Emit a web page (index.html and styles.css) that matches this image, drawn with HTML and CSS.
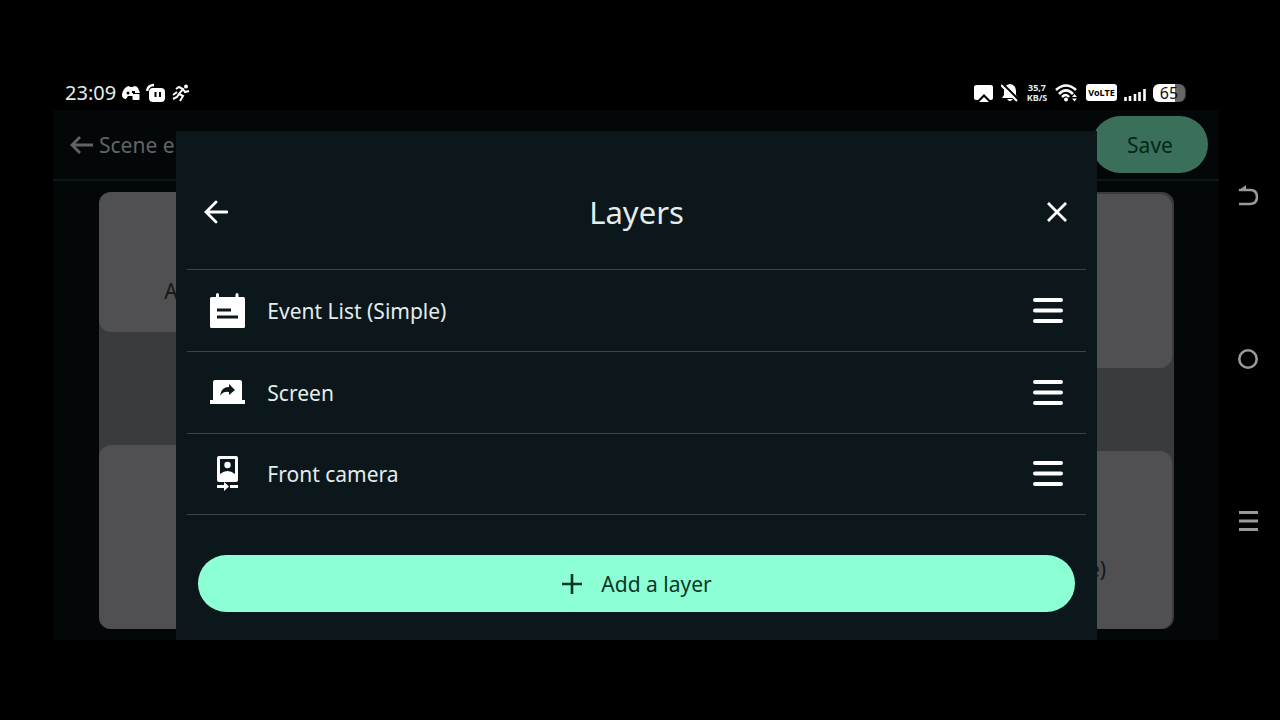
FILE: index.html
```
<!DOCTYPE html>
<html lang="en">
<head>
    <meta charset="utf-8">
    <title>Layers</title>
    <link rel="stylesheet" href="styles.css">
</head>
<body>
<header class="status-bar">
    <div class="status-group">
        <span class="clock">23:09</span>
        <svg width="18" height="20" viewBox="0 0 18 20">
            <path d="M3 5 Q5 3 7 3 L8 4 H11 L12 3 Q15 3 16 5 L18 10 H11 V13 H6 L4 16 Q1 16 0 13 Q0 8 3 5z" fill="#fff"/>
            <circle cx="6" cy="10" r="1.5" fill="#000"/>
            <path d="M10 9 H13" stroke="#000" stroke-width="2"/>
            <rect x="10.500" y="11" width="7" height="6" rx="1" fill="#fff"/>
        </svg>
        <svg width="20" height="20" viewBox="0 0 20 20">
            <path d="M1 8 Q2 2 8 2" fill="none" stroke="#fff" stroke-width="2.4"/>
            <rect x="3" y="5" width="16" height="14" rx="4" fill="#fff"/>
            <path d="M9.500 9 V14 M14 9 V14" stroke="#000" stroke-width="2"/>
        </svg>
        <svg width="18" height="20" viewBox="0 0 18 20">
            <circle cx="14" cy="3.500" r="2" fill="#fff"/>
            <path d="M4 6 L7 4 L11 6 L7 11 L11 13 L8 18 M11 6 L13 9 L17 8 M7 11 L5 14 L1 16 M1 12 L5 9" fill="none" stroke="#fff" stroke-width="2"/>
        </svg>
    </div>
    <div class="status-group status-right">
        <svg width="20" height="20" viewBox="0 0 20 20">
            <path d="M3 2 H17 Q19 2 19 4 V15 Q19 17 17 17 H16 L10 11 L4 17 H3 Q0 17 0 15 V4 Q0 2 3 2z" fill="#fff"/>
            <path d="M5 19 L10 14 L15 19z" fill="#fff"/>
        </svg>
        <svg width="18" height="20" viewBox="0 0 18 20">
            <path d="M9 1 Q15 2 15 8 V12 L17 15 H1 L3 12 V8 Q3 2 9 1z M6 16 H12 Q9 20 6 16z" fill="#fff"/>
            <path d="M2 1 L18 17" stroke="#000" stroke-width="2"/>
            <path d="M0 2 L16 18" stroke="#fff" stroke-width="2"/>
        </svg>
        <span class="net-speed"><span>35,7</span><span>KB/S</span></span>
        <svg width="24" height="20" viewBox="0 0 24 20">
            <path d="M1 7 Q11 -2 21 7 M4 11 Q11 4 18 11 M7 14 Q11 10 14 14" fill="none" stroke="#fff" stroke-width="2.6"/>
            <circle cx="11" cy="16.500" r="2" fill="#fff"/>
            <path d="M17 14 L19.500 11 L22 14z M17 15.500 H22 L19.500 18.500z" fill="#fff"/>
        </svg>
        <span class="volte">VoLTE</span>
        <svg width="22" height="20" viewBox="0 0 22 20">
            <path d="M1.500 18 V14 M6 18 V13 M11 18 V11 M15.500 18 V9 M20.500 18 V6" stroke="#fff" stroke-width="2.6"/>
        </svg>
        <span class="battery">65</span>
    </div>
</header>

<div class="screen">
    <main class="app">
        <div class="top-bar">
            <a class="back-link" href="#">
                <svg width="24" height="20" viewBox="0 0 24 20">
                    <path d="M23 10 H2 M10 2 L2 10 L10 18" fill="none" stroke="#626464" stroke-width="2.8"/>
                </svg>
                Scene e
            </a>
            <button class="save-button">Save</button>
        </div>
        <div class="stage">
            <div class="column column-left">
                <div class="card card-a">A</div>
                <div class="card card-b"></div>
            </div>
            <div class="column column-right">
                <div class="card card-c"></div>
                <div class="card card-d">e)</div>
            </div>
        </div>

        <div class="overlay">
            <section class="dialog" role="dialog" aria-labelledby="dialogTitle">
                <div class="dialog-header">
                    <button aria-label="Back">
                        <svg width="24" height="24" viewBox="0 0 24 24">
                            <path d="M23 12 H2 M12 2 L2 12 L12 22" fill="none" stroke="#fff" stroke-width="2.8" stroke-linecap="round"/>
                        </svg>
                    </button>
                    <h1 id="dialogTitle">Layers</h1>
                    <button aria-label="Close">
                        <svg width="24" height="24" viewBox="0 0 24 24">
                            <path d="M3 3 L21 21 M21 3 L3 21" stroke="#fff" stroke-width="2.8"/>
                        </svg>
                    </button>
                </div>
                <ul class="layers">
                    <li>
                        <svg width="36" height="36" viewBox="0 0 36 36">
                            <path d="M8.500 1.500 V6 M28 1.500 V6" stroke="#fff" stroke-width="3" stroke-linecap="round"/>
                            <rect x="1" y="4" width="35" height="31" rx="1.500" fill="#fff"/>
                            <path d="M8 17 H22 M8 24 H29" stroke="#0b171b" stroke-width="2.8"/>
                        </svg>
                        <span>Event List (Simple)</span>
                        <button class="handle" aria-label="Move Event List">
                            <svg width="30" height="26" viewBox="0 0 30 26">
                                <path d="M2 2 H28 M2 12.500 H28 M2 23 H28" stroke="#fff" stroke-width="4" stroke-linecap="round"/>
                            </svg>
                        </button>
                    </li>
                    <li>
                        <svg width="36" height="36" viewBox="0 0 36 36">
                            <path d="M6 5 H31 Q33 5 33 7 V25 H36 V29 H1 V25 H4 V7 Q4 5 6 5z" fill="#fff"/>
                            <path d="M11 21 Q12 12 20 12 V9 L26 15 L20 20 V17 Q14 16 11 21z" fill="#0b171b"/>
                        </svg>
                        <span>Screen</span>
                        <button class="handle" aria-label="Move Screen">
                            <svg width="30" height="26" viewBox="0 0 30 26">
                                <path d="M2 2 H28 M2 12.500 H28 M2 23 H28" stroke="#fff" stroke-width="4" stroke-linecap="round"/>
                            </svg>
                        </button>
                    </li>
                    <li>
                        <svg width="36" height="36" viewBox="0 0 36 36">
                            <path d="M10 0 H27 Q29 0 29 2 V24 Q29 26 27 26 H10 Q8 26 8 24 V2 Q8 0 10 0z" fill="#fff"/>
                            <path d="M11 3 H26 V18 Q18.500 12 11 18z" fill="#0b171b"/>
                            <circle cx="18.500" cy="9" r="3.200" fill="#fff"/>
                            <path d="M8 29 H15 V26 L20 30.500 L15 35 V32 H8z M21 29 H29 V32 H21z" fill="#fff"/>
                        </svg>
                        <span>Front camera</span>
                        <button class="handle" aria-label="Move Front camera">
                            <svg width="30" height="26" viewBox="0 0 30 26">
                                <path d="M2 2 H28 M2 12.500 H28 M2 23 H28" stroke="#fff" stroke-width="4" stroke-linecap="round"/>
                            </svg>
                        </button>
                    </li>
                </ul>
                <button class="add-button">
                    <svg width="22" height="22" viewBox="0 0 22 22">
                        <path d="M11 1 V21 M1 11 H21" stroke="#0d3527" stroke-width="2.6"/>
                    </svg>
                    Add a layer
                </button>
            </section>
        </div>
    </main>

    <nav class="system-nav">
        <button aria-label="Back">
            <svg width="20" height="22" viewBox="0 0 20 22">
                <path d="M1 5 H12 Q19 5 19 12 Q19 19 12 19 H1" fill="none" stroke="#999" stroke-width="2.6"/>
                <path d="M0 6 L8 0 V5z" fill="#999"/>
            </svg>
        </button>
        <button aria-label="Home">
            <svg width="20" height="22" viewBox="0 0 20 22">
                <circle cx="10" cy="11" r="8.700" fill="none" stroke="#999" stroke-width="2.6"/>
            </svg>
        </button>
        <button aria-label="Menu">
            <svg width="20" height="22" viewBox="0 0 20 22">
                <path d="M1 2.500 H20 M1 11 H20 M1 19.500 H20" stroke="#999" stroke-width="2.8"/>
            </svg>
        </button>
    </nav>
</div>
</body>
</html>
```

FILE: styles.css
```
* {
    box-sizing: border-box;
}
body {
    margin: 0;
    min-height: 100vh;
    padding: 75px 0 80px;
    display: flex;
    flex-direction: column;
    background-color: #000;
    color: #e4ecec;
    font-family: "Noto Sans", sans-serif;
    font-size: 21px;
}
button {
    border: none;
    padding: 0;
    background: none;
    font: inherit;
    color: inherit;
}
svg {
    display: block;
    flex: none;
}

/* status bar */
.status-bar {
    height: 35px;
    padding: 0 95px 0 65px;
    display: flex;
    align-items: center;
    justify-content: space-between;
}
.status-group {
    display: flex;
    align-items: center;
    gap: 6px;
}
.status-right {
    gap: 7px;
}
.clock {
    font-size: 20px;
    line-height: 36px;
}
.net-speed {
    width: 22px;
    display: flex;
    flex-direction: column;
    align-items: center;
    font-size: 9px;
    font-weight: bold;
    line-height: 10px;
}
.volte {
    width: 31px;
    border-radius: 3px;
    background-color: #fff;
    color: #000;
    font-size: 9px;
    font-weight: bold;
    line-height: 17px;
    text-align: center;
}
.battery {
    width: 32px;
    border-radius: 6px;
    background: linear-gradient(to right, #fff 68%, #666 68%);
    box-shadow: 2px 0 0 -1px #333;
    color: #111;
    font-size: 16px;
    line-height: 18px;
    text-align: center;
}

/* app behind the dialog */
.screen {
    flex: 1;
    display: flex;
}
.app {
    position: relative;
    flex: 1;
    margin-left: 53px;
    display: flex;
    flex-direction: column;
    background-color: #040708;
}
.top-bar {
    height: 71px;
    padding: 0 11px 0 17px;
    display: flex;
    align-items: center;
    justify-content: space-between;
    border-bottom: 2px solid #101517;
}
.back-link {
    display: flex;
    align-items: center;
    gap: 5px;
    color: #626464;
    text-decoration: none;
}
.save-button {
    width: 116px;
    height: 57px;
    border-radius: 29px;
    background-color: #3a6f5a;
    color: #06251a;
}
.stage {
    flex: 1;
    margin: 11px 45px 11px 46px;
    display: flex;
    justify-content: space-between;
    border-radius: 12px;
    background-color: #393b3c;
}
.column {
    width: 144px;
    display: flex;
    flex-direction: column;
    justify-content: space-between;
}
.column-right {
    width: 152px;
    padding: 2px 2px 0 0;
}
.card {
    padding-top: 58px;
    display: flex;
    align-items: center;
    justify-content: center;
    border-radius: 12px;
    background-color: #504f51;
    color: #151818;
}
.card-a {
    height: 32%;
}
.card-b {
    height: 42%;
}
.card-c {
    height: 40%;
}
.card-d {
    height: 41%;
}

/* dialog */
.overlay {
    position: absolute;
    inset: 0;
    padding: 21px 0 0 1px;
    display: flex;
    justify-content: center;
}
.dialog {
    width: 79%;
    padding: 0 11px 28px;
    display: flex;
    flex-direction: column;
    background-color: #0b171b;
}
.dialog-header {
    height: 138px;
    padding: 24px 17px 0;
    display: flex;
    align-items: center;
    justify-content: space-between;
}
.dialog-header h1 {
    margin: 0;
    font-size: 31px;
    font-weight: normal;
}
.layers {
    margin: 0;
    padding: 0;
    list-style: none;
    border-top: 1px solid #39464a;
}
.layers li {
    height: 82px;
    padding: 0 23px 0 22px;
    display: flex;
    align-items: center;
    gap: 22px;
    border-bottom: 1px solid #39464a;
}
.layers li:last-child {
    height: 81px;
}
.handle {
    margin-left: auto;
}
.add-button {
    height: 57px;
    margin: 40px 11px 0;
    display: flex;
    align-items: center;
    justify-content: center;
    gap: 18px;
    border-radius: 29px;
    background-color: #8cffd5;
    color: #0d3527;
}

/* android buttons */
.system-nav {
    width: 61px;
    padding: 75px 4px 108px 0;
    display: flex;
    flex-direction: column;
    align-items: center;
    justify-content: space-between;
}
```
